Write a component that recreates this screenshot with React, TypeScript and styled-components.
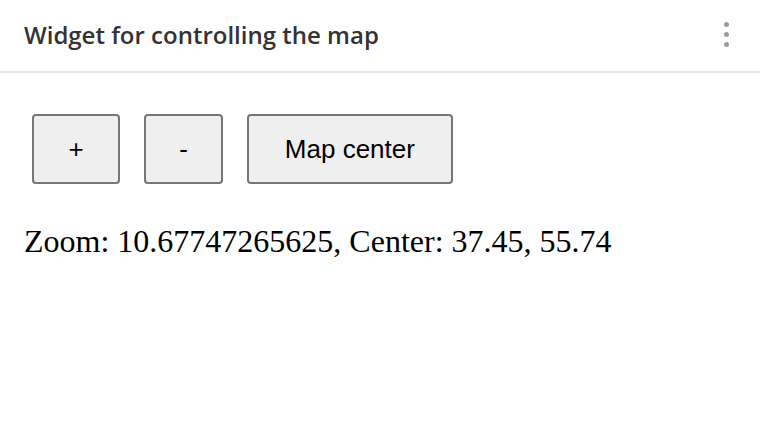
import React from "react";
import styled, { createGlobalStyle } from "styled-components";

const Global = createGlobalStyle`
  html, body { margin: 0; padding: 0; background: #fff; }
  body { width: 760px; height: 438px; overflow: hidden; }
`;

const Widget = styled.div`
  width: 760px;
  height: 438px;
  display: flex;
  flex-direction: column;
  background: #fff;
`;

const Header = styled.div`
  height: 71px;
  border-bottom: 2px solid #e6e6e6;
  display: flex;
  align-items: center;
  justify-content: space-between;
  padding: 0 24px;
  box-sizing: content-box;
`;

const Title = styled.div`
  font-family: "Open Sans", sans-serif;
  font-size: 24px;
  font-weight: 600;
  color: #333;
  margin-top: -2px;
`;

const Menu = styled.div`
  display: flex;
  flex-direction: column;
  gap: 5px;
  margin-right: 7px;
  margin-top: -2px;
`;

const Dot = styled.span`
  width: 5px;
  height: 5px;
  border-radius: 50%;
  background: #9a9a9a;
`;

const Body = styled.div`
  padding: 41px 24px 0 32px;
  display: flex;
  flex-direction: column;
`;

const Toolbar = styled.div`
  display: flex;
  gap: 24px;
`;

const Button = styled.button<{ $pad?: number }>`
  height: 70px;
  padding: 0 ${(p) => p.$pad ?? 34.5}px;
  border: 2px solid #767676;
  border-radius: 4px;
  background: #efefef;
  font-family: "Liberation Sans", Arial, sans-serif;
  font-size: 26px;
  color: #000;
`;

const Info = styled.div`
  margin-top: 39px;
  margin-left: -8px;
  font-family: "Liberation Serif", "Times New Roman", serif;
  font-size: 32px;
  color: #000;
`;

export default function App() {
  return (
    <Widget>
      <Global />
      <Header>
        <Title>Widget for controlling the map</Title>
        <Menu>
          <Dot />
          <Dot />
          <Dot />
        </Menu>
      </Header>
      <Body>
        <Toolbar>
          <Button>+</Button>
          <Button $pad={33}>-</Button>
          <Button $pad={36}>Map center</Button>
        </Toolbar>
        <Info>Zoom: 10.67747265625, Center: 37.45, 55.74</Info>
      </Body>
    </Widget>
  );
}
